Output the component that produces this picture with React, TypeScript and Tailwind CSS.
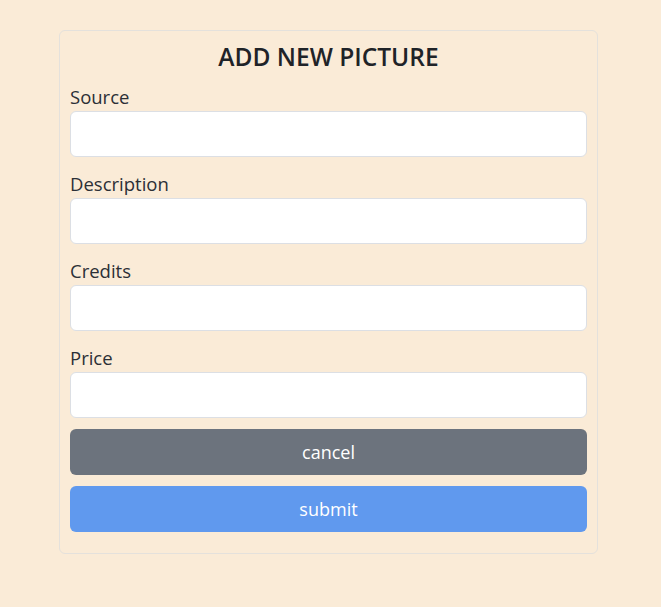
const fields = ["Source", "Description", "Credits", "Price"];

export default function App() {
  return (
    <div
      className="min-h-[607px] bg-[#faebd7] pt-[30px] pl-[59px]"
      style={{ fontFamily: '"Open Sans", "Noto Sans", sans-serif' }}
    >
      <form
        className="w-[539px] rounded-md border border-[#e4e1dc] px-[10px] pt-[10px] pb-[21px]"
        onSubmit={(e) => e.preventDefault()}
      >
        <h2 className="mb-[10px] text-center text-[24.5px] leading-8 font-semibold text-[#1f2328]">
          ADD NEW PICTURE
        </h2>

        {fields.map((f) => (
          <div key={f} className="mb-[13px] flex flex-col">
            <label className="text-[18.5px] leading-7 text-[#2b2f36]">{f}</label>
            <input
              type="text"
              className="h-[46px] rounded-md border border-[#dcdfe4] bg-white px-3 outline-none"
            />
          </div>
        ))}

        <div className="-mt-[2px] flex flex-col gap-[11px]">
          <button
            type="button"
            className="h-[46px] rounded-md bg-[#6c737d] text-lg text-white"
          >
            cancel
          </button>
          <button
            type="submit"
            className="h-[46px] rounded-md bg-[#6099ee] text-lg text-white"
          >
            submit
          </button>
        </div>
      </form>
    </div>
  );
}
